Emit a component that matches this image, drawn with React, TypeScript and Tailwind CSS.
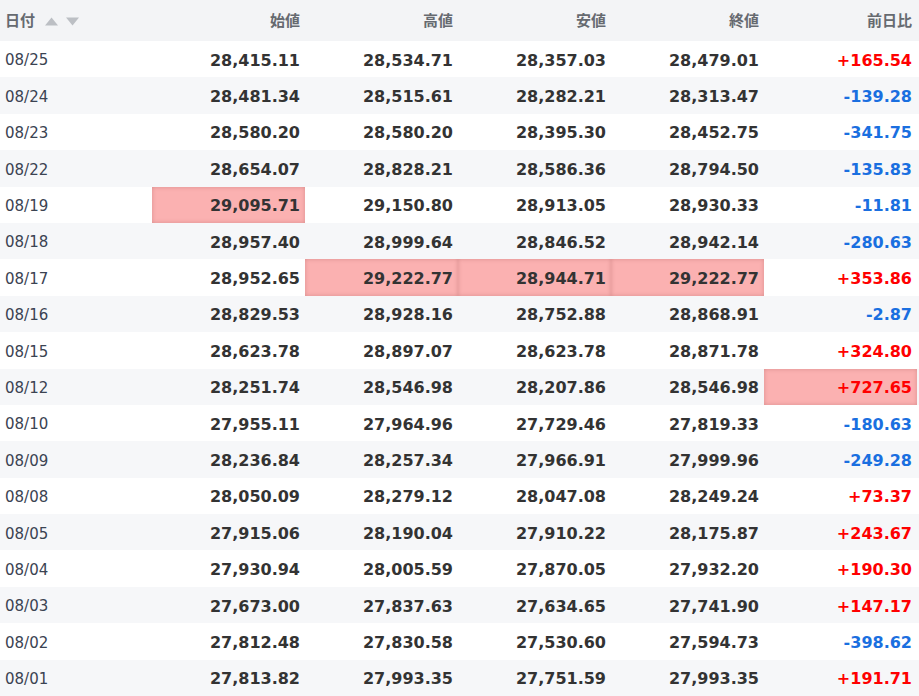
import React from 'react'

type Row = {
  date: string
  open: string
  high: string
  low: string
  close: string
  diff: string
  hl?: ('open' | 'high' | 'low' | 'close' | 'diff')[]
}

const rows: Row[] = [
  { date: '08/25', open: '28,415.11', high: '28,534.71', low: '28,357.03', close: '28,479.01', diff: '+165.54' },
  { date: '08/24', open: '28,481.34', high: '28,515.61', low: '28,282.21', close: '28,313.47', diff: '-139.28' },
  { date: '08/23', open: '28,580.20', high: '28,580.20', low: '28,395.30', close: '28,452.75', diff: '-341.75' },
  { date: '08/22', open: '28,654.07', high: '28,828.21', low: '28,586.36', close: '28,794.50', diff: '-135.83' },
  { date: '08/19', open: '29,095.71', high: '29,150.80', low: '28,913.05', close: '28,930.33', diff: '-11.81', hl: ['open'] },
  { date: '08/18', open: '28,957.40', high: '28,999.64', low: '28,846.52', close: '28,942.14', diff: '-280.63' },
  { date: '08/17', open: '28,952.65', high: '29,222.77', low: '28,944.71', close: '29,222.77', diff: '+353.86', hl: ['high', 'low', 'close'] },
  { date: '08/16', open: '28,829.53', high: '28,928.16', low: '28,752.88', close: '28,868.91', diff: '-2.87' },
  { date: '08/15', open: '28,623.78', high: '28,897.07', low: '28,623.78', close: '28,871.78', diff: '+324.80' },
  { date: '08/12', open: '28,251.74', high: '28,546.98', low: '28,207.86', close: '28,546.98', diff: '+727.65', hl: ['diff'] },
  { date: '08/10', open: '27,955.11', high: '27,964.96', low: '27,729.46', close: '27,819.33', diff: '-180.63' },
  { date: '08/09', open: '28,236.84', high: '28,257.34', low: '27,966.91', close: '27,999.96', diff: '-249.28' },
  { date: '08/08', open: '28,050.09', high: '28,279.12', low: '28,047.08', close: '28,249.24', diff: '+73.37' },
  { date: '08/05', open: '27,915.06', high: '28,190.04', low: '27,910.22', close: '28,175.87', diff: '+243.67' },
  { date: '08/04', open: '27,930.94', high: '28,005.59', low: '27,870.05', close: '27,932.20', diff: '+190.30' },
  { date: '08/03', open: '27,673.00', high: '27,837.63', low: '27,634.65', close: '27,741.90', diff: '+147.17' },
  { date: '08/02', open: '27,812.48', high: '27,830.58', low: '27,530.60', close: '27,594.73', diff: '-398.62' },
  { date: '08/01', open: '27,813.82', high: '27,993.35', low: '27,751.59', close: '27,993.35', diff: '+191.71' },
]

const numFont = "font-['DejaVu_Sans',Verdana,sans-serif]"
const jpFont = "font-['Noto_Sans_CJK_JP','Noto_Sans',sans-serif]"

function Cell({ value, hl, color }: { value: string; hl?: boolean; color?: string }) {
  return (
    <div
      className={
        'flex items-center justify-end pr-[5px] pt-[3px] text-[16px] font-bold ' +
        numFont +
        ' ' +
        (color ?? 'text-[#333333]') +
        (hl ? ' bg-[#fbb1b1] shadow-[inset_0_0_4px_rgba(120,40,40,0.25)]' : '')
      }
    >
      {value}
    </div>
  )
}

export default function App() {
  return (
    <div className="w-[919px] h-[696px] overflow-hidden bg-white">
      <div className="grid grid-cols-[152px_repeat(5,153px)] h-[41px] bg-[#f3f4f6] text-[#666a70] text-[15px] font-bold">
        <div className={'flex items-center pl-[5px] gap-[10px] ' + jpFont}>
          <span>日付</span>
          <span className="flex items-center gap-[8px] pt-[1px]">
            <svg width="13" height="9" viewBox="0 0 13 9">
              <polygon points="6.5,0.5 13,8.5 0,8.5" fill="#bcbfc4" />
            </svg>
            <svg width="13" height="9" viewBox="0 0 13 9">
              <polygon points="0,0.5 13,0.5 6.5,8.5" fill="#bcbfc4" />
            </svg>
          </span>
        </div>
        {['始値', '高値', '安値', '終値', '前日比'].map((h) => (
          <div key={h} className={'flex items-center justify-end pr-[5px] ' + jpFont}>
            {h}
          </div>
        ))}
      </div>
      {rows.map((r, i) => (
        <div
          key={r.date}
          className={
            'grid grid-cols-[152px_repeat(5,153px)] h-[36.4px] ' + (i % 2 === 0 ? 'bg-white' : 'bg-[#f6f7f9]')
          }
        >
          <div className={'flex items-center pl-[5px] pt-[3px] text-[15px] text-[#3b4352] ' + numFont}>{r.date}</div>
          <Cell value={r.open} hl={r.hl?.includes('open')} />
          <Cell value={r.high} hl={r.hl?.includes('high')} />
          <Cell value={r.low} hl={r.hl?.includes('low')} />
          <Cell value={r.close} hl={r.hl?.includes('close')} />
          <Cell
            value={r.diff}
            hl={r.hl?.includes('diff')}
            color={r.diff.startsWith('+') ? 'text-[#ff0000]' : 'text-[#1a6fe0]'}
          />
        </div>
      ))}
    </div>
  )
}
